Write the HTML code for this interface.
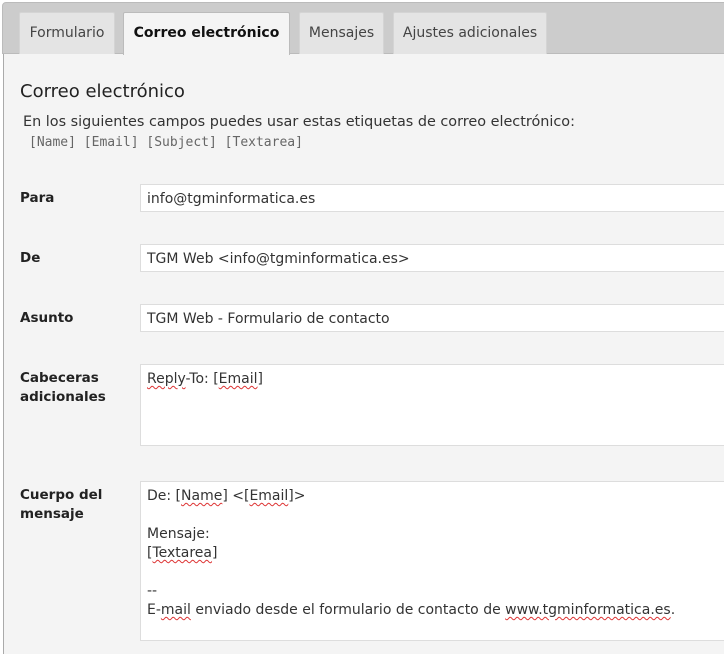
<!DOCTYPE html>
<html><head><meta charset="utf-8"><style>
body{margin:0;width:724px;height:627px;overflow:hidden;background:#fff;font-family:"DejaVu Sans",Verdana,sans-serif;color:#222;}
.bar{position:absolute;left:2px;top:2px;width:730px;height:52px;background:#ccc;border:1px solid #bbb;border-radius:4px 0 0 0;box-sizing:border-box;}
.tab{position:absolute;top:12px;height:42px;background:#e4e4e4;border:1px solid #d4d4d4;border-bottom:none;box-sizing:border-box;font-size:14px;color:#444;line-height:40px;text-align:center;border-radius:2px 2px 0 0}
.tab.a{background:#f4f4f4;color:#111;font-weight:bold;height:43px;border-color:#bbb}
.panel{position:absolute;left:3px;top:54px;width:740px;height:600px;background:#f4f4f4;border-left:1px solid #aaa;}
.abs{position:absolute;white-space:nowrap}
.lbl{position:absolute;left:20px;font-weight:bold;font-size:13.5px;line-height:19px;color:#222}
.in{position:absolute;left:140px;width:600px;background:#fff;border:1px solid #ddd;box-sizing:border-box;font-size:14px;color:#333;padding:0 6px;white-space:nowrap}
u{text-decoration:underline wavy #d33;text-decoration-thickness:1px;text-underline-offset:2px}
</style></head><body>
<div class="bar"></div>
<div class="tab" style="left:19px;width:96px">Formulario</div>
<div class="tab" style="left:299px;width:85px">Mensajes</div>
<div class="tab" style="left:393px;width:154px">Ajustes adicionales</div>
<div class="panel"></div>
<div class="tab a" style="left:123px;width:167px">Correo electrónico</div>
<div class="abs" style="left:20px;top:81px;font-size:18px;color:#222">Correo electrónico</div>
<div class="abs" style="left:23px;top:114px;font-size:14.4px;color:#333">En los siguientes campos puedes usar estas etiquetas de correo electrónico:</div>
<div class="abs" style="left:29px;top:135px;font-size:13px;color:#666;font-family:'DejaVu Sans Mono','Liberation Mono',monospace">[Name] [Email] [Subject] [Textarea]</div>
<div class="lbl" style="top:189px">Para</div>
<div class="in" style="top:184px;height:28px;line-height:29px">info@tgminformatica.es</div>
<div class="lbl" style="top:249px">De</div>
<div class="in" style="top:244px;height:28px;line-height:29px">TGM Web &lt;info@tgminformatica.es&gt;</div>
<div class="lbl" style="top:309px">Asunto</div>
<div class="in" style="top:304px;height:28px;line-height:29px">TGM Web - Formulario de contacto</div>
<div class="lbl" style="top:369px">Cabeceras<br>adicionales</div>
<div class="in" style="top:364px;height:82px;line-height:19px;padding-top:5px"><u>Reply</u>-To: [<u>Email</u>]</div>
<div class="lbl" style="top:486px">Cuerpo del<br>mensaje</div>
<div class="in" style="top:481px;height:160px;line-height:19px;padding-top:5px">De: [<u>Name</u>] &lt;[<u>Email</u>]&gt;<br><br>Mensaje:<br>[<u>Textarea</u>]<br><br>--<br>E-<u>mail</u> enviado desde el formulario de contacto de <u>www.tgminformatica.es</u>.</div>
</body></html>
